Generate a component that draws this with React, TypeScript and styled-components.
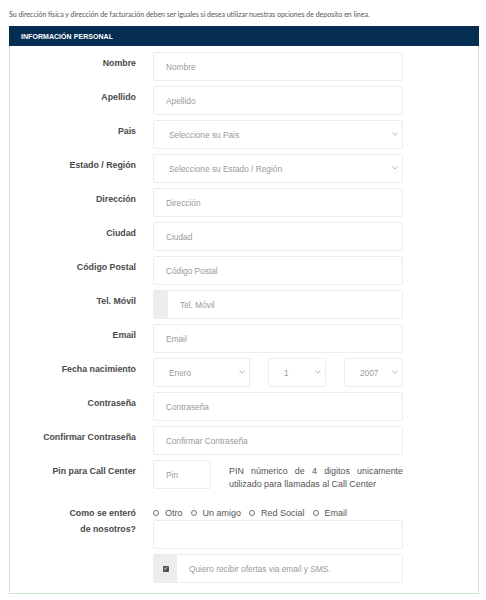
import { ReactNode } from 'react'
import styled, { createGlobalStyle } from 'styled-components'

const GlobalStyle = createGlobalStyle`
  html, body {
    margin: 0;
    padding: 0;
    background: #ffffff;
  }
  body {
    font-family: "Liberation Sans", Arial, sans-serif;
  }
  * {
    box-sizing: border-box;
  }
`

const Page = styled.div`
  width: 486px;
  padding: 9px 7px 0 9px;
`

const Note = styled.p`
  margin: 0 0 7px 0;
  font-family: Lato, "Open Sans", sans-serif;
  font-size: 7px;
  line-height: 10px;
  color: #555;
`

const Panel = styled.section`
  border: 1px solid #c9e3c8;
  border-top: none;
`

const PanelHeader = styled.header`
  height: 20px;
  margin: 0 -1px;
  padding-left: 12px;
  display: flex;
  align-items: center;
  background: #062d52;
  color: #ffffff;
  font-size: 7px;
  font-weight: 700;
  letter-spacing: 0.05px;
`

const PanelBody = styled.div`
  padding: 6px 0 10px 0;
  display: flex;
  flex-direction: column;
  gap: 5px;
`

const Row = styled.div<{ $extraGap?: number }>`
  display: grid;
  grid-template-columns: 126px 250px;
  column-gap: 17px;
  margin-bottom: ${(p) => p.$extraGap ?? 0}px;
`

const Label = styled.label`
  padding-top: 3px;
  text-align: right;
  font-size: 8.8px;
  line-height: 16px;
  font-weight: 700;
  color: #4a4a4a;
`

const TextInput = styled.input`
  width: 100%;
  height: 29px;
  padding: 0 12px;
  border: 1px solid #ececec;
  border-radius: 2px;
  background: #ffffff;
  font-family: "Liberation Sans", Arial, sans-serif;
  font-size: 8.3px;
  color: #555;
  outline: none;

  &::placeholder {
    color: #9a9a9a;
  }
`

const TextArea = styled.textarea`
  width: 100%;
  height: 29px;
  border: 1px solid #ececec;
  border-radius: 2px;
  resize: none;
  outline: none;
  display: block;
`

const SelectWrap = styled.div`
  position: relative;
  width: 100%;
`

const Select = styled.select<{ $pad?: number }>`
  width: 100%;
  height: 29px;
  padding: 0 0 0 ${(p) => p.$pad ?? 15}px;
  appearance: none;
  border: 1px solid #ececec;
  border-radius: 2px;
  background: #ffffff;
  font-family: "Liberation Sans", Arial, sans-serif;
  font-size: 8.3px;
  color: #9a9a9a;
  outline: none;
`

const Chevron = styled.svg`
  position: absolute;
  right: 5px;
  top: 12px;
  width: 6px;
  height: 4px;
  pointer-events: none;
`

const DateGrid = styled.div`
  display: grid;
  grid-template-columns: 97px 58px 59px;
  justify-content: space-between;
`

const InputGroup = styled.div`
  display: flex;
  height: 29px;
  border: 1px solid #ececec;
  border-radius: 2px;
  overflow: hidden;
`

const Addon = styled.span<{ $width: number }>`
  flex: 0 0 ${(p) => p.$width}px;
  display: flex;
  align-items: center;
  justify-content: center;
  background: #ececec;
`

const GroupInput = styled.input`
  flex: 1;
  min-width: 0;
  border: none;
  padding: 0 12px;
  font-family: "Liberation Sans", Arial, sans-serif;
  font-size: 8.3px;
  outline: none;

  &::placeholder {
    color: #9a9a9a;
  }
`

const GroupText = styled.span`
  flex: 1;
  display: flex;
  align-items: center;
  padding-left: 12px;
  font-size: 8.3px;
  color: #9a9a9a;
`

const CheckMark = styled.span`
  width: 6px;
  height: 6px;
  border-radius: 1px;
  background: #4d4d4d;
  display: flex;
  align-items: center;
  justify-content: center;
`

const PinField = styled.div`
  display: grid;
  grid-template-columns: 58px 1fr;
  column-gap: 18px;
  align-items: start;
`

const HelpText = styled.p`
  margin: 5px 0 0 0;
  font-size: 8.9px;
  line-height: 13px;
  color: #555;
  text-align: justify;
  text-align-last: left;
`

const SourceField = styled.div`
  display: flex;
  flex-direction: column;
  gap: 5px;
`

const RadioRow = styled.div`
  display: flex;
  gap: 8px;
  padding-top: 4px;
  height: 18px;
  align-items: center;
  margin-bottom: -5px;
`

const RadioOption = styled.label`
  display: flex;
  align-items: center;
  gap: 6px;
  font-size: 9px;
  color: #555;
`

const RadioDot = styled.span`
  width: 6px;
  height: 6px;
  border: 1px solid #777;
  border-radius: 50%;
`

const ChevronIcon = () => (
  <Chevron viewBox="0 0 6 4">
    <polyline points="0.5,0.5 3,3.2 5.5,0.5" fill="none" stroke="#9a9a9a" strokeWidth="0.7" />
  </Chevron>
)

const SelectField = ({ value, pad }: { value: string; pad?: number }) => (
  <SelectWrap>
    <Select $pad={pad} defaultValue={value}>
      <option>{value}</option>
    </Select>
    <ChevronIcon />
  </SelectWrap>
)

const FormRow = ({
  label,
  children,
  extraGap,
}: {
  label: ReactNode
  children: ReactNode
  extraGap?: number
}) => (
  <Row $extraGap={extraGap}>
    <Label>{label}</Label>
    <div>{children}</div>
  </Row>
)

const textFields = ['Dirección', 'Ciudad', 'Código Postal']

export default function App() {
  return (
    <Page>
      <GlobalStyle />
      <Note>
        Su dirección física y dirección de facturación deben ser iguales si desea utilizar nuestras
        opciones de deposito en linea.
      </Note>
      <Panel>
        <PanelHeader>INFORMACIÓN PERSONAL</PanelHeader>
        <PanelBody>
          <FormRow label="Nombre">
            <TextInput placeholder="Nombre" />
          </FormRow>
          <FormRow label="Apellido">
            <TextInput placeholder="Apellido" />
          </FormRow>
          <FormRow label="Pais">
            <SelectField value="Seleccione su Pais" />
          </FormRow>
          <FormRow label="Estado / Región">
            <SelectField value="Seleccione su Estado / Región" />
          </FormRow>
          {textFields.map((f) => (
            <FormRow key={f} label={f}>
              <TextInput placeholder={f} />
            </FormRow>
          ))}
          <FormRow label="Tel. Móvil">
            <InputGroup>
              <Addon $width={14} />
              <GroupInput placeholder="Tel. Móvil" />
            </InputGroup>
          </FormRow>
          <FormRow label="Email">
            <TextInput placeholder="Email" />
          </FormRow>
          <FormRow label="Fecha nacimiento">
            <DateGrid>
              <SelectField value="Enero" />
              <SelectField value="1" />
              <SelectField value="2007" />
            </DateGrid>
          </FormRow>
          <FormRow label="Contraseña">
            <TextInput type="password" placeholder="Contraseña" />
          </FormRow>
          <FormRow label="Confirmar Contraseña">
            <TextInput type="password" placeholder="Confirmar Contraseña" />
          </FormRow>
          <FormRow label="Pin para Call Center" extraGap={6}>
            <PinField>
              <TextInput placeholder="Pin" />
              <HelpText>
                PIN númerico de 4 digitos unicamente utilizado para llamadas al Call Center
              </HelpText>
            </PinField>
          </FormRow>
          <FormRow
            label={
              <>
                Como se enteró
                <br />
                de nosotros?
              </>
            }
          >
            <SourceField>
              <RadioRow>
                {['Otro', 'Un amigo', 'Red Social', 'Email'].map((o) => (
                  <RadioOption key={o}>
                    <RadioDot />
                    {o}
                  </RadioOption>
                ))}
              </RadioRow>
              <TextArea />
              <InputGroup>
                <Addon $width={23}>
                  <CheckMark>
                    <svg width="5" height="5" viewBox="0 0 5 5">
                      <polyline
                        points="1,2.6 2,3.6 4,1.2"
                        fill="none"
                        stroke="#fff"
                        strokeWidth="0.9"
                      />
                    </svg>
                  </CheckMark>
                </Addon>
                <GroupText>Quiero recibir ofertas via email y SMS.</GroupText>
              </InputGroup>
            </SourceField>
          </FormRow>
        </PanelBody>
      </Panel>
    </Page>
  )
}
